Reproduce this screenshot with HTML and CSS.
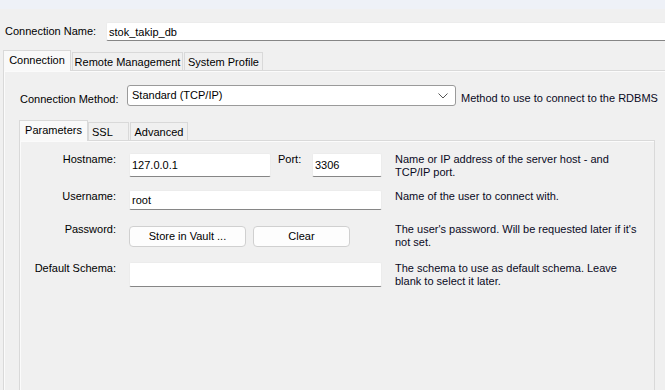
FILE: index.html
```html
<!DOCTYPE html>
<html lang="en">
<head>
    <meta charset="UTF-8">
    <title>Connection</title>
    <link rel="stylesheet" href="styles.css">
</head>
<body>
    <div class="topbar"></div>

    <div class="name-row">
        <label for="connName">Connection Name:</label>
        <input type="text" id="connName" class="field name-field" value="stok_takip_db">
    </div>

    <div class="tabs outer-tabs">
        <span class="tab active">Connection</span>
        <span class="tab">Remote Management</span>
        <span class="tab">System Profile</span>
    </div>

    <div class="panel outer-panel">
        <div class="method-row">
            <label>Connection Method:</label>
            <div class="select">
                <span>Standard (TCP/IP)</span>
                <svg width="10" height="6" viewBox="0 0 10 6"><path d="M0.5 0.5 L5 5 L9.5 0.5" fill="none" stroke="#555" stroke-width="1"/></svg>
            </div>
            <span class="hint method-hint">Method to use to connect to the RDBMS</span>
        </div>

        <div class="tabs inner-tabs">
            <span class="tab active">Parameters</span>
            <span class="tab">SSL</span>
            <span class="tab">Advanced</span>
        </div>

        <div class="panel inner-panel">
            <div class="param-row row-host">
                <label>Hostname:</label>
                <div class="control host-control">
                    <input type="text" class="field host-field" value="127.0.0.1">
                    <span class="port-label">Port:</span>
                    <input type="text" class="field port-field" value="3306">
                </div>
                <span class="hint">Name or IP address of the server host - and<br>TCP/IP port.</span>
            </div>

            <div class="param-row row-user">
                <label>Username:</label>
                <div class="control">
                    <input type="text" class="field user-field" value="root">
                </div>
                <span class="hint">Name of the user to connect with.</span>
            </div>

            <div class="param-row row-pass">
                <label>Password:</label>
                <div class="control buttons">
                    <button class="btn vault-btn">Store in Vault ...</button>
                    <button class="btn clear-btn">Clear</button>
                </div>
                <span class="hint">The user's password. Will be requested later if it's<br>not set.</span>
            </div>

            <div class="param-row row-schema">
                <label>Default Schema:</label>
                <div class="control">
                    <input type="text" class="field schema-field" value="">
                </div>
                <span class="hint">The schema to use as default schema. Leave<br>blank to select it later.</span>
            </div>
        </div>
    </div>
</body>
</html>
```

FILE: styles.css
```css
body {
    margin: 0;
    height: 390px;
    overflow: hidden;
    font-family: 'Liberation Sans', Arial, sans-serif;
    font-size: 11px;
    line-height: 13px;
    white-space: nowrap;
    color: #000;
    background-color: #f0f0f0;
}

.topbar {
    height: 9px;
    background-color: #eef1f7;
}

.field {
    box-sizing: border-box;
    margin: 0;
    padding: 0 2px;
    font: inherit;
    color: #000;
    background: #fff;
    border: 1px solid #ececec;
    border-bottom-color: #868686;
    border-radius: 2px;
    outline: none;
}

/* connection name */
.name-row {
    display: flex;
    align-items: center;
    margin-top: 13px;
    padding-left: 5px;
}

.name-row label {
    width: 101px;
    flex: none;
}

.name-field {
    flex: 1;
    height: 19px;
    border-right: none;
    border-radius: 2px 0 0 2px;
}

/* tabs */
.tabs {
    display: flex;
    position: relative;
    z-index: 1;
    height: 21px;
}

.outer-tabs {
    margin-top: 9px;
    padding-left: 3px;
}

.tab {
    box-sizing: border-box;
    height: 18px;
    margin-top: 2px;
    margin-right: 1px;
    padding: 3px 0 0;
    text-align: center;
    background-color: #f0f0f0;
    border: 1px solid #d9d9d9;
    border-bottom: none;
}

.tab.active {
    height: 21px;
    margin-top: 0;
    padding-top: 3px;
    background-color: #f9f9f9;
}

.outer-tabs .tab:nth-child(1) { width: 68px; }
.outer-tabs .tab:nth-child(2) { width: 111px; }
.outer-tabs .tab:nth-child(3) { width: 79px; }

.inner-tabs .tab:nth-child(1) { width: 69px; margin-right: 0; }
.inner-tabs .tab:nth-child(2) { width: 41px; text-align: left; padding-left: 3px; }
.inner-tabs .tab:nth-child(3) { width: 58px; }

.panel {
    box-sizing: border-box;
    margin-top: -1px;
    border: 1px solid #d9d9d9;
    box-shadow: inset 1px 1px 0 #fbfbfb;
}

.outer-panel {
    margin-left: 3px;
    margin-right: -10px;
    height: 330px;
    padding: 14px 0 0 15px;
}

/* connection method */
.method-row {
    display: flex;
    align-items: flex-start;
}

.method-row label {
    width: 107px;
    flex: none;
    margin-left: 1px;
    margin-top: 8px;
}

.select {
    box-sizing: border-box;
    width: 329px;
    height: 21px;
    display: flex;
    align-items: center;
    justify-content: space-between;
    padding: 0 7px 0 4px;
    background: #fff;
    border: 1px solid #9a9a9a;
    border-radius: 3px;
}

.method-hint {
    margin-left: 5px;
    margin-top: 7px;
}

.inner-tabs {
    margin-top: 14px;
}

.inner-panel {
    width: 636px;
    height: 260px;
    padding-top: 12px;
}

/* parameter rows */
.param-row {
    display: grid;
    grid-template-columns: 96px 253px 1fr;
    column-gap: 13px;
    align-items: start;
    margin-bottom: 13px;
}

.param-row.row-host {
    margin-bottom: 11px;
}

.param-row label {
    text-align: right;
}

.control {
    display: flex;
    align-items: flex-start;
}

.host-field {
    width: 142px;
    height: 24px;
}

.port-label {
    width: 34px;
    padding-left: 7px;
}

.port-field {
    width: 70px;
    height: 24px;
}

.user-field {
    width: 253px;
    height: 20px;
}

.buttons {
    gap: 7px;
    padding-top: 3px;
}

.btn {
    box-sizing: border-box;
    height: 21px;
    padding: 0;
    font: inherit;
    color: #000;
    background-color: #fdfdfd;
    border: 1px solid #d0d0d0;
    border-radius: 4px;
}

.vault-btn { width: 117px; }
.clear-btn { width: 97px; }

.schema-field {
    width: 253px;
    height: 25px;
}

.hint {
    color: #0a0a1e;
}
```
